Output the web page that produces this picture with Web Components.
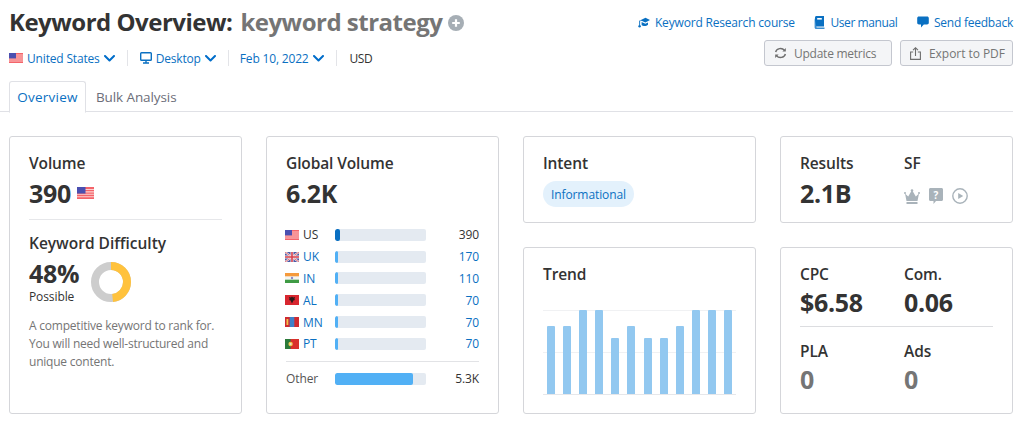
<!DOCTYPE html>
<html lang="en"><head><meta charset="utf-8"><title>Keyword Overview</title>
<style>
html,body{margin:0;padding:0;background:#fff}
body{width:1024px;height:424px;overflow:hidden;font-family:"Open Sans","Noto Sans",sans-serif;color:#333}
</style></head><body>
<kw-app></kw-app>
<script>
const FLAGS={
us:`<rect width="14" height="10" fill="#f4646a"/><path d="M0 2h14M0 4h14M0 6h14M0 8h14" stroke="#fbd0d0" stroke-width=".9"/><rect width="7" height="5.4" fill="#4a4fb0"/>`,
uk:`<rect width="14" height="10" fill="#4a5aa8"/><path d="M0 0l14 10M14 0L0 10" stroke="#f3e6e6" stroke-width="2"/><path d="M0 0l14 10M14 0L0 10" stroke="#d8434f" stroke-width=".7"/><path d="M7 0v10M0 5h14" stroke="#f3e6e6" stroke-width="3"/><path d="M7 0v10M0 5h14" stroke="#d8434f" stroke-width="1.6"/>`,
in:`<rect width="14" height="10" fill="#f4f4f2"/><rect width="14" height="3.3" fill="#f59a3c"/><rect y="6.7" width="14" height="3.3" fill="#3f9b45"/><circle cx="7" cy="5" r="1.2" fill="#8a8ac8"/>`,
al:`<rect width="14" height="10" fill="#d8262f"/><path d="M7 1.5l1 1 2-.5-.6 2 .6 1-1.6.6L7 8.5 5.6 5.6 4 5l.6-1L4 2l2 .5z" fill="#2a1a1a"/>`,
mn:`<rect width="14" height="10" fill="#cf2a30"/><rect x="4.7" width="4.6" height="10" fill="#3f80c8"/><rect x="1.5" y="2" width="1.8" height="6" fill="#f2c14a"/>`,
pt:`<rect width="14" height="10" fill="#d9302c"/><rect width="5.6" height="10" fill="#2c7a3a"/><circle cx="5.6" cy="5" r="2.2" fill="#f0c24a"/><circle cx="5.6" cy="5" r="1.1" fill="#e8e2da"/>`
};
function shadow(el,html){el.attachShadow({mode:'open'}).innerHTML=html;}

class KwFlag extends HTMLElement{connectedCallback(){
  const w=+(this.getAttribute('w')||14);
  shadow(this,`<style>:host{display:inline-flex;flex:none}svg{display:block;width:${w}px;height:${w*10/14}px}</style>
  <svg viewBox="0 0 14 10">${FLAGS[this.getAttribute('code')]}</svg>`);
}}
customElements.define('kw-flag',KwFlag);

class KwChevron extends HTMLElement{connectedCallback(){
  shadow(this,`<style>:host{display:inline-flex;flex:none}svg{display:block;width:11px;height:7px}</style>
  <svg viewBox="0 0 11 7"><path d="M1 1l4.5 4.5L10 1" fill="none" stroke="#006dca" stroke-width="2" stroke-linecap="round" stroke-linejoin="round"/></svg>`);
}}
customElements.define('kw-chevron',KwChevron);

class KwLink extends HTMLElement{connectedCallback(){
  shadow(this,`<style>:host{display:inline-flex;align-items:center;gap:5px;color:#0a70c2;font-size:12px;letter-spacing:-.23px}</style><slot name="icon"></slot><slot></slot>`);
}}
customElements.define('kw-link',KwLink);

class KwButton extends HTMLElement{connectedCallback(){
  shadow(this,`<style>:host{box-sizing:border-box;display:inline-flex;align-items:center;height:26px;gap:7px;padding:0 0 0 9px;border:1px solid #c4c7cf;border-radius:3px;background:#f4f5f7;color:#757575;font-size:12px}</style><slot name="icon"></slot><slot></slot>`);
}}
customElements.define('kw-button',KwButton);

class KwHeader extends HTMLElement{connectedCallback(){
  shadow(this,`<style>
  :host{display:block}
  .top{display:flex;justify-content:space-between;padding:0 11px 0 9px;height:81px}
  h1{margin:0;padding-top:5px;font-size:24px;line-height:33px;font-weight:700;color:#333;letter-spacing:-.5px;display:flex;align-items:center;white-space:nowrap}
  h1 span{color:#757575;margin-left:8px}
  h1 svg{margin:3px 0 0 6px;width:16px;height:16px}
  .meta{display:flex;align-items:center;height:16px;margin-top:12px;font-size:12px;color:#0a70c2;letter-spacing:-.17px}
  .it{display:flex;align-items:center;gap:4px}
  .sep{width:1px;height:16px;background:#e3e4e8;margin:0 12px}
  .date{margin-left:-1px}
  .usd{color:#333;margin-left:1px;letter-spacing:-.5px}
  .right{display:flex;flex-direction:column;align-items:flex-end}
  .links{display:flex;gap:19.5px;margin-top:14px;height:16px;align-items:center}
  .btns{display:flex;gap:8px;margin-top:10px}
  svg.i{display:block;flex:none}
  .tabs{display:flex;height:30px;padding-left:9px;margin-right:11px;border-bottom:1.5px solid #e0e1e6;font-size:13.5px;letter-spacing:-.1px}
  .tab{box-sizing:border-box;height:31.5px;display:flex;align-items:center;padding:0 8px 0 7px;border:1px solid transparent;color:#6c6e79}
  .tab.on{width:77px;border-color:#e0e1e6;border-bottom:1.5px solid #fff;border-radius:3px 3px 0 0;color:#0a70c2;justify-content:center;padding:0;background:#fff;margin-right:2px;letter-spacing:.25px}
  </style>
  <div class="top">
    <div>
      <h1>Keyword Overview:<span>keyword strategy</span>
      <svg viewBox="0 0 16 16"><circle cx="8" cy="8" r="8" fill="#a6aeb5"/><path d="M8 4.2v7.6M4.2 8h7.6" stroke="#fff" stroke-width="2.2"/></svg></h1>
      <div class="meta">
        <div class="it"><kw-flag code="us"></kw-flag>United States<kw-chevron></kw-chevron></div>
        <div class="sep"></div>
        <div class="it"><svg class="i" width="12" height="12" viewBox="0 0 12 12"><rect x=".7" y=".7" width="10.6" height="7.6" rx=".8" fill="none" stroke="#0a70c2" stroke-width="1.4"/><path d="M6 8.5v2M3 11h6" stroke="#0a70c2" stroke-width="1.4"/></svg>Desktop<kw-chevron></kw-chevron></div>
        <div class="sep"></div>
        <div class="it date">Feb 10, 2022<kw-chevron></kw-chevron></div>
        <div class="sep"></div>
        <div class="it usd">USD</div>
      </div>
    </div>
    <div class="right">
      <div class="links">
        <kw-link style="letter-spacing:-.18px"><svg slot="icon" class="i" width="12" height="11" viewBox="0 0 12 11"><path d="M2.4 3.2L7.5.8 12 3 7.4 5.4 3.6 3.7 2.4 4.2z" fill="#0a70c2"/><path d="M3.6 5l3.8 1.8L10 5.6v2.2C8.6 9.4 5 9.600 3.6 8z" fill="#0a70c2"/><path d="M1.6 3.6v4.6" stroke="#0a70c2" stroke-width=".9"/><circle cx="1.6" cy="9.2" r="1.2" fill="#0a70c2"/></svg>Keyword Research course</kw-link>
        <kw-link style="letter-spacing:-.4px"><svg slot="icon" class="i" width="11" height="13" viewBox="0 0 11 13"><path d="M1 1.6C1 .7 1.6 0 2.5 0H10v10.5H2.5C1.6 10.5 1 11 1 11.5z" fill="#0a70c2"/><path d="M.6 2v9.4C.6 12.2 1.2 13 2.2 13h8.3v-1.4H2.6" fill="#3d8fd1"/><rect x="3.2" y="2" width="4.6" height="1.6" fill="#fff"/></svg>User manual</kw-link>
        <kw-link><svg slot="icon" class="i" width="12" height="12" viewBox="0 0 12 12"><path d="M2 .5h8c1.100 0 1.800.7 1.800 1.700v4.600c0 1-.7 1.700-1.800 1.700H6.800L4 11.500v-3H2C.9 8.500.2 7.800.2 6.800V2.200C.2 1.200.9.500 2 .5z" fill="#0a70c2"/></svg>Send feedback</kw-link>
      </div>
      <div class="btns">
        <kw-button style="width:128px;letter-spacing:-.25px"><svg slot="icon" class="i" width="13" height="12" viewBox="0 0 13 12" fill="none" stroke="#6e6e6e" stroke-width="1.4"><path d="M1.600 5A5 4.600 0 0 1 10.500 3.400"/><path d="M11.400 7A5 4.600 0 0 1 2.500 8.600"/><path d="M11.800 1v3.400H8.400z" fill="#6e6e6e" stroke="none"/><path d="M1.200 11V7.600h3.400z" fill="#6e6e6e" stroke="none"/></svg>Update metrics</kw-button>
        <kw-button style="width:113px;gap:8px;letter-spacing:-.05px"><svg slot="icon" class="i" width="11" height="13" viewBox="0 0 11 13" fill="none" stroke="#6e6e6e" stroke-width="1.100"><path d="M3.200 5H.6v7.400h9.800V5H7.800"/><path d="M5.500 9V1"/><path d="M3 3.200L5.500.8 8 3.200"/></svg>Export to PDF</kw-button>
      </div>
    </div>
  </div>
  <div class="tabs"><div class="tab on">Overview</div><div class="tab">Bulk Analysis</div></div>`);
}}
customElements.define('kw-header',KwHeader);

class KwCard extends HTMLElement{connectedCallback(){
  shadow(this,`<style>:host{box-sizing:border-box;display:block;border:1px solid #d5d6da;border-radius:3px;background:#fff;padding:var(--pad,16px 19px 0)}</style><slot></slot>`);
}}
customElements.define('kw-card',KwCard);

class KwMetric extends HTMLElement{connectedCallback(){
  const v=this.getAttribute('value'),muted=this.hasAttribute('muted');
  shadow(this,`<style>
  :host{display:block}
  .l{font-size:15.5px;line-height:20px;font-weight:600;color:#333;letter-spacing:-.12px;white-space:nowrap}
  .v{display:flex;align-items:center;gap:6px;margin-top:var(--vgap,4px);font-size:25px;line-height:32px;font-weight:700;color:${muted?'#757575':'#333'};letter-spacing:-.3px;white-space:nowrap}
  </style><div class="l">${this.getAttribute('label')}</div>${v===null?'':`<div class="v">${v}<slot></slot></div>`}`);
}}
customElements.define('kw-metric',KwMetric);

class KwDonut extends HTMLElement{connectedCallback(){
  const p=+this.getAttribute('value'),r=16,c=2*Math.PI*r;
  shadow(this,`<style>:host{display:block;flex:none}svg{display:block}</style>
  <svg width="40" height="40" viewBox="0 0 40 40"><circle cx="20" cy="20" r="${r}" fill="none" stroke="#cdcdcd" stroke-width="8"/>
  <circle cx="20" cy="20" r="${r}" fill="none" stroke="#ffc23d" stroke-width="8" stroke-dasharray="${c*p/100} ${c}" transform="rotate(-90 20 20)"/></svg>`);
}}
customElements.define('kw-donut',KwDonut);

class KwCountry extends HTMLElement{connectedCallback(){
  const code=this.getAttribute('code'),pct=this.getAttribute('pct'),dark=this.hasAttribute('dark'),plain=this.hasAttribute('plain');
  const other=this.hasAttribute('other');
  const col=plain?'#333':'#0a70c2';
  shadow(this,`<style>
  :host{display:grid;grid-template-columns:50px 91px 1fr;align-items:center;height:21.8px;font-size:12px;letter-spacing:-.1px}
  .n{display:flex;align-items:center;gap:4px;color:${col}}
  .o{color:#555;padding-left:1px}
  .b{height:12px;border-radius:2px;background:#e4eaf1;overflow:hidden}
  .f{height:100%;width:${pct};border-radius:2px;background:${dark?'#0a70c2':'#51b0f5'}}
  .v{text-align:right;color:${col}}
  </style>
  <div class="n ${other?'o':''}">${code?`<kw-flag code="${code}"></kw-flag>`:''}${this.getAttribute('name')}</div>
  <div class="b"><div class="f"></div></div><div class="v">${this.getAttribute('value')}</div>`);
}}
customElements.define('kw-country',KwCountry);

class KwTrend extends HTMLElement{connectedCallback(){
  const h=[68,68,84,84,56,68,56,56,68,84,84,84];
  shadow(this,`<style>
  :host{display:flex;height:84px;border-bottom:1px solid #e6e7ea;background:linear-gradient(#f0f1f3,#f0f1f3) 0 0/100% 1px no-repeat,linear-gradient(#f0f1f3,#f0f1f3) 0 42px/100% 1px no-repeat;align-items:flex-end}
  div{flex:1;display:flex;justify-content:center;align-items:flex-end}
  i{display:block;width:8px;background:#92c8f0;border-radius:1px 1px 0 0}
  </style>${h.map(x=>`<div><i style="height:${x}px"></i></div>`).join('')}`);
}}
customElements.define('kw-trend',KwTrend);

class KwSerpIcons extends HTMLElement{connectedCallback(){
  shadow(this,`<style>:host{display:flex;align-items:center;gap:9px;height:16px}svg{display:block}</style>
  <svg width="16" height="15" viewBox="0 0 16 15" fill="#a9b3ba"><path d="M1 4.500l3.200 3L8 1l3.800 6.500 3.200-3-1.500 7.500h-11z"/><circle cx="8" cy="1.500" r="1.300"/><circle cx="1" cy="4" r="1"/><circle cx="15" cy="4" r="1"/><rect x="2.500" y="13" width="11" height="2"/></svg>
  <svg width="14" height="16" viewBox="0 0 14 16"><path d="M1.500 0h11C13.400 0 14 .6 14 1.500v10c0 .9-.6 1.500-1.500 1.500H7l-2.500 3V13h-3C.6 13 0 12.400 0 11.500v-10C0 .6.600 0 1.500 0z" fill="#a9b3ba"/><text x="7" y="10.500" font-size="10" font-weight="700" font-family="Open Sans" text-anchor="middle" fill="#fff">?</text></svg>
  <svg width="16" height="16" viewBox="0 0 16 16"><circle cx="8" cy="8" r="7.200" fill="none" stroke="#a9b3ba" stroke-width="1.400"/><path d="M6.200 5l5 3-5 3z" fill="#a9b3ba"/></svg>`);
}}
customElements.define('kw-serp-icons',KwSerpIcons);

class KwApp extends HTMLElement{connectedCallback(){
  shadow(this,`<style>
  :host{display:block}
  .grid{display:grid;grid-template-columns:repeat(4,233px);gap:24px;margin:24px 0 0 9px;height:278px}
  .col{display:flex;flex-direction:column;gap:24px}
  .col kw-card:last-child{flex:1}
  .hr{height:1px;background:#e6e7ea;margin:10px 0}
  .kd{font-size:15.5px;line-height:20px;font-weight:600;margin-top:13px}
  .kdrow{display:flex;align-items:flex-start;gap:12px;margin-top:6px}
  .pct{font-size:25px;line-height:28px;font-weight:700;letter-spacing:-.3px}
  .pos{font-size:12px;line-height:16px;color:#333;letter-spacing:-.1px;margin-top:2px}
  kw-donut{margin-top:3px}
  p{margin:12px 0 0;font-size:12px;line-height:18px;color:#757575;letter-spacing:-.22px;white-space:nowrap}
  .list{margin:15px 0 0 -1px}
  .hr2{height:1px;background:#e2e3e6;margin:6px 0}
  kw-country[other]{margin-left:-1px}
  .two{display:grid;grid-template-columns:104px 1fr}
  .pill{display:inline-block;margin-top:8px;height:26px;line-height:27px;padding:0 8px;border-radius:13px;background:#e3f1fc;color:#0a70c2;font-size:12px;letter-spacing:-.1px}
  .ttl{font-size:15.5px;line-height:20px;font-weight:600;letter-spacing:-.12px}
  kw-trend{margin-top:26px}
  .hr3{height:1px;background:#dcdde0;margin:8px 0 14px}
  .price{--pad:16px 19px 0;--vgap:2px}
  </style>
  <kw-header></kw-header>
  <div class="grid">
    <kw-card>
      <kw-metric label="Volume" value="390"><kw-flag code="us" w="17"></kw-flag></kw-metric>
      <div class="hr"></div>
      <div class="kd">Keyword Difficulty</div>
      <div class="kdrow"><div><div class="pct">48%</div><div class="pos">Possible</div></div><kw-donut value="48"></kw-donut></div>
      <p>A competitive keyword to rank for.<br>You will need well-structured and<br>unique content.</p>
    </kw-card>
    <kw-card>
      <kw-metric label="Global Volume" value="6.2K"></kw-metric>
      <div class="list">
        <kw-country code="us" name="US" pct="6%" value="390" dark plain></kw-country>
        <kw-country code="uk" name="UK" pct="3%" value="170"></kw-country>
        <kw-country code="in" name="IN" pct="3%" value="110"></kw-country>
        <kw-country code="al" name="AL" pct="3%" value="70"></kw-country>
        <kw-country code="mn" name="MN" pct="3%" value="70"></kw-country>
        <kw-country code="pt" name="PT" pct="3%" value="70"></kw-country>
      </div>
      <div class="hr2"></div>
      <kw-country name="Other" pct="86%" value="5.3K" plain other></kw-country>
    </kw-card>
    <div class="col">
      <kw-card style="height:87px"><div class="ttl">Intent</div><span class="pill">Informational</span></kw-card>
      <kw-card><div class="ttl">Trend</div><kw-trend></kw-trend></kw-card>
    </div>
    <div class="col">
      <kw-card style="height:87px"><div class="two"><kw-metric label="Results" value="2.1B"></kw-metric><div><kw-metric label="SF"></kw-metric><kw-serp-icons style="margin-top:15px"></kw-serp-icons></div></div></kw-card>
      <kw-card class="price">
        <div class="two"><kw-metric label="CPC" value="$6.58"></kw-metric><kw-metric label="Com." value="0.06"></kw-metric></div>
        <div class="hr3"></div>
        <div class="two"><kw-metric label="PLA" value="0" muted></kw-metric><kw-metric label="Ads" value="0" muted></kw-metric></div>
      </kw-card>
    </div>
  </div>`);
}}
customElements.define('kw-app',KwApp);
</script>
</body></html>
